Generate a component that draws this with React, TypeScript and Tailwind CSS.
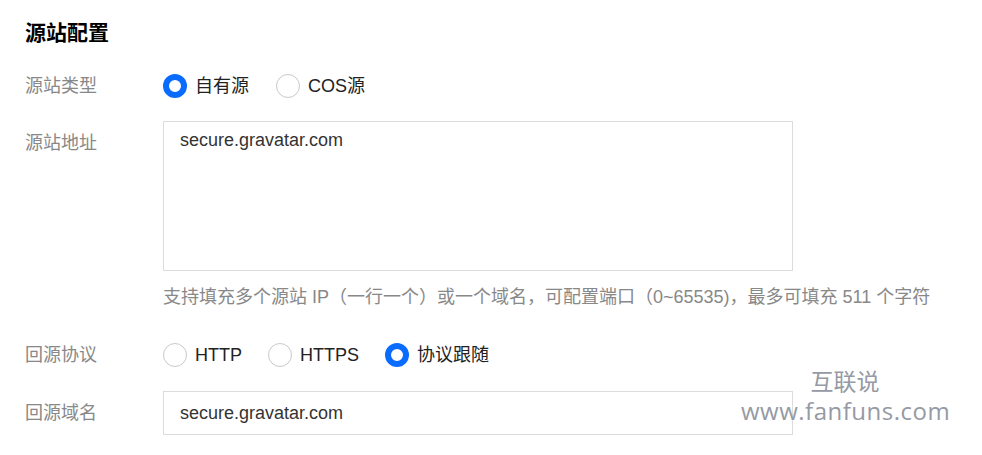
import React from 'react';

const font = { fontFamily: '"Liberation Sans", "Noto Sans CJK SC", sans-serif' };

interface RadioProps {
    label: string;
    checked?: boolean;
}

const Radio: React.FC<RadioProps> = ({ label, checked }) => (
    <label className="flex items-center gap-[8px] cursor-pointer">
        <span className={`block w-[24px] h-[24px] rounded-full bg-white ${checked ? 'border-[6px] border-[#0a6cff]' : 'border border-[#c9c9c9]'}`}></span>
        <span className="text-[18px] text-[#222]">{label}</span>
    </label>
);

const Label: React.FC<{ text: string; className?: string }> = ({ text, className }) => (
    <div className={`w-[138px] shrink-0 text-[18px] leading-[24px] text-[#888] ${className || ''}`}>{text}</div>
);

export default function App() {
    return (
        <div className="relative w-[982px] h-[455px] bg-white overflow-hidden pt-[19px] pl-[25px]" style={font}>
            <h2 className="h-[28px] leading-[28px] text-[21px] font-bold text-black">源站配置</h2>

            <div className="mt-[23px] h-[32px] flex items-center">
                <Label text="源站类型" />
                <div className="flex items-center gap-[27px]">
                    <Radio label="自有源" checked />
                    <Radio label="COS源" />
                </div>
            </div>

            <div className="mt-[19px] flex items-start">
                <Label text="源站地址" className="pt-[10px]" />
                <div>
                    <textarea
                        readOnly
                        value="secure.gravatar.com"
                        className="block w-[630px] h-[150px] resize-none border border-[#dcdcdc] px-[16px] pt-[6px] text-[18px] leading-[24px] text-[#333] outline-none"
                    ></textarea>
                    <p className="mt-[14px] text-[18px] leading-[24px] text-[#888] whitespace-nowrap">
                        支持填充多个源站 IP（一行一个）或一个域名，可配置端口（0~65535)，最多可填充 511 个字符
                    </p>
                </div>
            </div>

            <div className="mt-[30px] h-[32px] flex items-center">
                <Label text="回源协议" />
                <div className="flex items-center gap-[26px]">
                    <Radio label="HTTP" />
                    <Radio label="HTTPS" />
                    <Radio label="协议跟随" checked />
                </div>
            </div>

            <div className="mt-[20px] flex items-center">
                <Label text="回源域名" />
                <input
                    readOnly
                    value="secure.gravatar.com"
                    className="block w-[630px] h-[44px] border border-[#dcdcdc] px-[16px] text-[18px] text-[#333] outline-none"
                />
            </div>

            {/* watermark */}
            <div className="absolute left-[741px] top-[366px] w-[208px] text-center text-[#959aa4] pointer-events-none" style={{ fontFamily: '"Open Sans", "Noto Sans CJK SC", sans-serif' }}>
                <div className="text-[23px] leading-[30px]">互联说</div>
                <div className="text-[24px] leading-[30px] tracking-[0.5px]">www.fanfuns.com</div>
            </div>
        </div>
    );
}
